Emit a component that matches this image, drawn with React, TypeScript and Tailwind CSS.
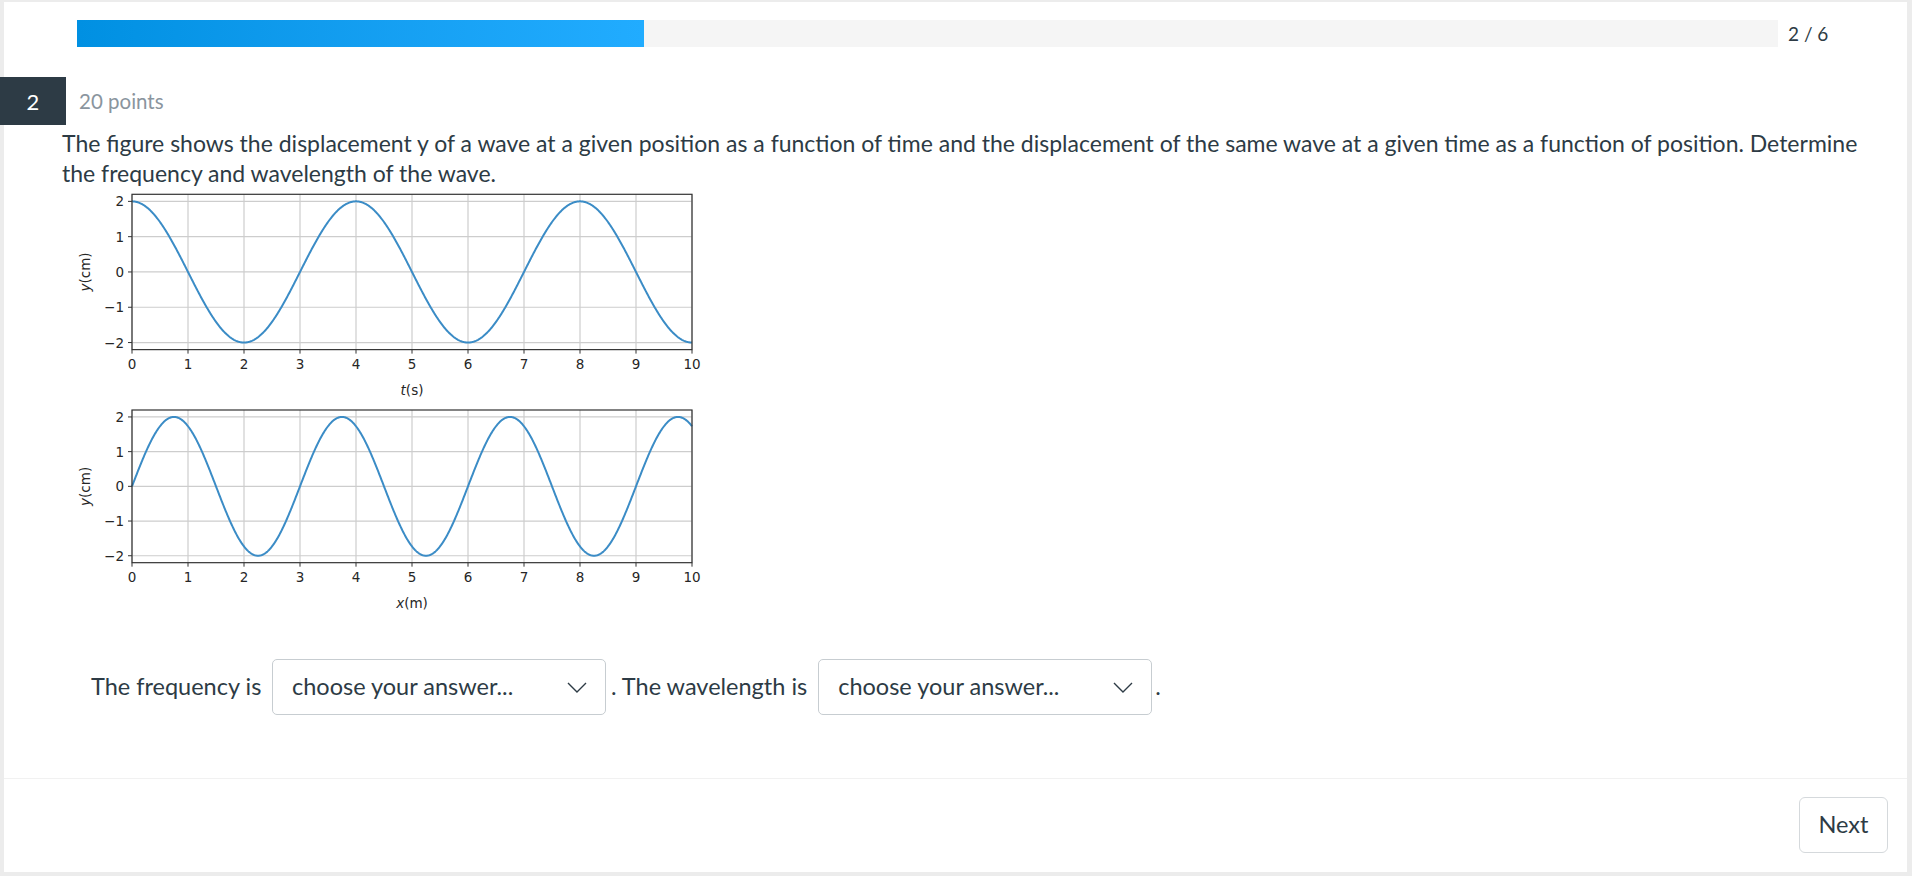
import React from "react";

type PlotProps = {
  top: number;
  uy: number;
  fn: (v: number) => number;
  xlabel: string;
  xvar: string;
};

const X0 = 70;
const UX = 56;

function Plot({ top, uy, fn, xlabel, xvar }: PlotProps) {
  const h = 4.4 * uy;
  const py = (v: number) => top + (2.2 - v) * uy;
  const pts: string[] = [];
  for (let i = 0; i <= 1000; i++) {
    const t = (i / 1000) * 10;
    pts.push(`${(X0 + UX * t).toFixed(2)},${py(fn(t)).toFixed(2)}`);
  }
  const xs = [0, 1, 2, 3, 4, 5, 6, 7, 8, 9, 10];
  const ys = [2, 1, 0, -1, -2];
  const bottom = top + h;
  return (
    <g>
      {xs.map((x) => (
        <line key={"gx" + x} x1={X0 + UX * x} x2={X0 + UX * x} y1={top} y2={bottom} stroke="#cdcdcd" strokeWidth={1.2} />
      ))}
      {ys.map((y) => (
        <line key={"gy" + y} x1={X0} x2={X0 + UX * 10} y1={py(y)} y2={py(y)} stroke="#cdcdcd" strokeWidth={1.2} />
      ))}
      <polyline points={pts.join(" ")} fill="none" stroke="#3b8cc6" strokeWidth={2} strokeLinejoin="round" />
      <rect x={X0} y={top} width={UX * 10} height={h} fill="none" stroke="#333333" strokeWidth={1.2} />
      {xs.map((x) => (
        <g key={"tx" + x}>
          <line x1={X0 + UX * x} x2={X0 + UX * x} y1={bottom} y2={bottom + 4} stroke="#333333" strokeWidth={1} />
          <text x={X0 + UX * x} y={bottom + 19} textAnchor="middle" fontSize={13.5} fill="#262626" fontFamily="DejaVu Sans">
            {x}
          </text>
        </g>
      ))}
      {ys.map((y) => (
        <g key={"ty" + y}>
          <line x1={X0 - 4} x2={X0} y1={py(y)} y2={py(y)} stroke="#333333" strokeWidth={1} />
          <text x={X0 - 8} y={py(y) + 5} textAnchor="end" fontSize={13.5} fill="#262626" fontFamily="DejaVu Sans">
            {y < 0 ? "\u2212" + Math.abs(y) : String(y)}
          </text>
        </g>
      ))}
      <text
        x={23}
        y={top + h / 2}
        transform={`rotate(-90 23 ${top + h / 2})`}
        textAnchor="middle"
        dominantBaseline="central"
        fontSize={13.5}
        fill="#262626"
        fontFamily="DejaVu Sans"
      >
        <tspan fontStyle="italic">y</tspan>(cm)
      </text>
      <text x={X0 + UX * 5} y={bottom + 45} textAnchor="middle" fontSize={13.5} fill="#262626" fontFamily="DejaVu Sans">
        <tspan fontStyle="italic">{xvar}</tspan>
        {xlabel}
      </text>
    </g>
  );
}

function Chevron() {
  return (
    <svg width="20" height="11" viewBox="0 0 20 11">
      <polyline points="1,1 10,10 19,1" fill="none" stroke="#2d3b45" strokeWidth="1.4" />
    </svg>
  );
}

function Dropdown() {
  return (
    <div className="w-[334px] h-[56px] border border-[#c7cdd1] rounded-[5px] flex items-center justify-between pl-[19px] pr-[18px] bg-white">
      <span className="text-[23.5px]">choose your answer...</span>
      <Chevron />
    </div>
  );
}

export default function App() {
  return (
    <div className="h-[876px] bg-[#ececec] pt-[2px] pl-[4px] pr-[5px] font-['Lato',sans-serif] text-[#2d3b45] overflow-hidden">
      <div className="bg-white h-[870px] flex flex-col">
        <div className="flex-1">
          <div className="flex items-center pt-[18px] pl-[73px]">
            <div className="w-[1701px] h-[27px] bg-[#f5f5f5]">
              <div className="w-[567px] h-full bg-gradient-to-r from-[#0090e2] to-[#21acff]" />
            </div>
            <span className="ml-[10px] text-[19px] leading-none">2 / 6</span>
          </div>

          <div className="flex items-center mt-[30px]">
            <div className="-ml-[4px] w-[66px] h-[48px] bg-[#2d3b45] text-white text-[22px] flex items-center justify-center">
              2
            </div>
            <span className="ml-[13px] text-[20.5px] text-[#8a959e]">20 points</span>
          </div>

          <p className="mt-[3px] pl-[58px] w-[1873px] text-[23px] leading-[30px]">
            The figure shows the displacement y of a wave at a given position as a function of time and the displacement of the same wave at a given time as a function of position. Determine the frequency and wavelength of the wave.
          </p>

          <div className="ml-[58px]">
            <svg width="640" height="430" viewBox="0 0 640 430" className="block">
              <Plot top={6.3} uy={35.3} fn={(t) => 2 * Math.cos((Math.PI * t) / 2)} xvar="t" xlabel="(s)" />
              <Plot top={222} uy={34.7} fn={(x) => 2 * Math.sin((2 * Math.PI * x) / 3)} xvar="x" xlabel="(m)" />
            </svg>
          </div>

          <div className="flex items-center mt-[41px] pl-[87px] text-[23.5px]">
            <span className="w-[181px] shrink-0">The frequency is</span>
            <Dropdown />
            <span className="ml-[5px]">. The wavelength is</span>
            <div className="ml-[11px]">
              <Dropdown />
            </div>
            <span className="ml-[3px]">.</span>
          </div>
        </div>

        <div className="h-[94px] border-t border-[#f1f1f1] flex justify-end items-start pt-[18px] pr-[19px]">
          <button className="w-[89px] h-[56px] border border-[#d5d9dc] rounded-[6px] bg-white text-[23.5px] text-[#2d3b45]">
            Next
          </button>
        </div>
      </div>
    </div>
  );
}
